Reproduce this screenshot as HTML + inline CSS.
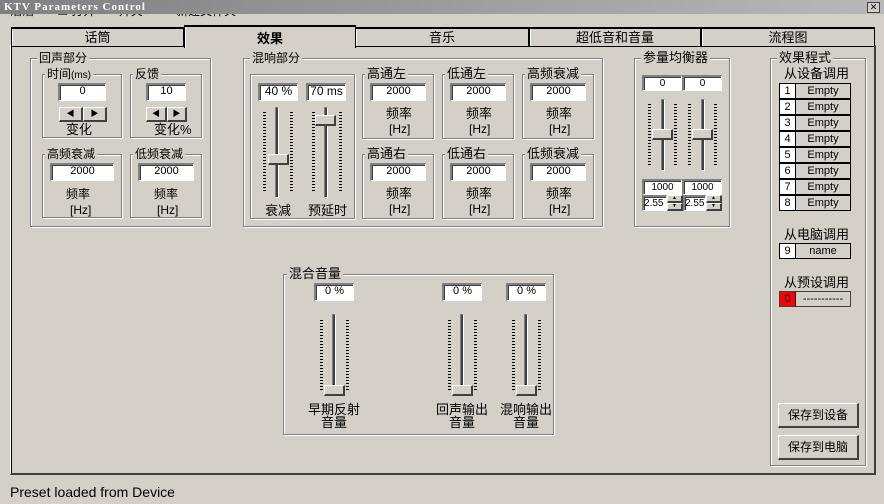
<!DOCTYPE html>
<html><head><meta charset="utf-8"><style>
*{box-sizing:border-box}
body{margin:0;width:884px;height:504px;background:#d4d0c8;position:relative;overflow:hidden;font-family:"Liberation Sans","Noto Sans CJK SC","WenQuanYi Zen Hei",sans-serif;font-size:12px;color:#000}
div,span{position:absolute}
.t{white-space:nowrap;line-height:13px}
.g{border:1px solid #808080;box-shadow:1px 1px 0 #fff inset,1px 1px 0 #fff}
.lg{background:#d4d0c8;padding:0 2px;top:-8px;left:6px;font-size:12px;line-height:14px;white-space:nowrap}
.in{background:#fff;border-top:2px solid #808080;border-left:2px solid #808080;border-right:1px solid #fff;border-bottom:1px solid #fff;text-align:center;font-size:11px;line-height:13px;box-shadow:1px 1px 0 #404040 inset}
.btn{background:#d4d0c8;border-top:1px solid #fff;border-left:1px solid #fff;border-right:2px solid #404040;border-bottom:2px solid #404040;text-align:center}
.tr{width:4px;border-left:1px solid #808080;border-top:1px solid #808080;border-right:1px solid #fff;border-bottom:1px solid #fff;background:#404040;box-shadow:0 0 0 0}
.tk{width:3px;background:repeating-linear-gradient(#000 0 1px,transparent 1px 3px)}
.th{width:21px;height:11px;background:#d4d0c8;border-top:1px solid #fff;border-left:1px solid #fff;border-right:2px solid #404040;border-bottom:2px solid #404040}
.c{text-align:center}
.tab{top:27px;height:19px;border:1px solid #000;border-bottom:none;border-top:2px solid #000;background:#d4d0c8;text-align:center;font-size:13px;line-height:17px;box-shadow:1px 0 0 #fff inset}
.row{left:779px;width:72px;height:16px;border:1px solid #000;background:#d4d0c8}
.row span{top:0;line-height:14px;font-size:11px}
</style></head><body>
<div style="left:0;top:0;width:884px;height:14px;background:linear-gradient(90deg,#808080,#b8b8b8)"></div>
<div class="t" style="left:4px;top:1px;color:#fff;font-family:'Liberation Serif',serif;font-weight:bold;font-size:11px;letter-spacing:1px">KTV Parameters Control</div>
<div style="left:867px;top:2px;width:13px;height:11px;border:1px solid #404040;background:#d4d0c8;font-size:9px;line-height:9px;text-align:center">✕</div>
<div style="left:10px;top:14px;width:260px;height:4px;overflow:hidden"><div class="t" style="top:-9px;left:0">沼沼 &nbsp;&nbsp;&nbsp;&nbsp;&nbsp;&nbsp;☐ 打开 &nbsp;&nbsp;&nbsp;&nbsp;&nbsp; 开关 &nbsp;&nbsp;&nbsp;&nbsp;&nbsp;&nbsp;&nbsp;&nbsp; 新建文件夹</div></div>

<!-- panel -->
<div style="left:10px;top:45px;width:866px;height:430px;border-left:1px solid #fff;border-top:1px solid #fff;border-right:2px solid #404040;border-bottom:2px solid #404040;box-shadow:1px 1px 0 #000 inset"></div>
<div class="tab" style="left:11px;width:173px;">话筒</div>
<div class="tab" style="left:355px;width:174px;">音乐</div>
<div class="tab" style="left:529px;width:172px;">超低音和音量</div>
<div class="tab" style="left:701px;width:174px;">流程图</div>
<div class="tab" style="left:184px;top:25px;width:172px;height:23px;border-bottom:none;font-weight:bold;line-height:24px">效果</div>

<!-- 回声部分 -->
<div class="g" style="left:30px;top:58px;width:181px;height:169px"><span class="lg">回声部分</span></div>
<div class="g" style="left:42px;top:74px;width:80px;height:64px"><span class="lg" style="left:2px">时间<small style="font-size:10px">(ms)</small></span></div>
<div class="in" style="left:58px;top:83px;width:48px;height:18px">0</div>
<div class="btn" style="left:59px;top:107px;width:24px;height:15px;font-size:8px;line-height:12px">◀</div>
<div class="btn" style="left:83px;top:107px;width:24px;height:15px;font-size:8px;line-height:12px">▶</div>
<div class="t" style="left:66px;top:123px;font-size:13px">变化</div>
<div class="g" style="left:130px;top:74px;width:72px;height:64px"><span class="lg" style="left:2px">反馈</span></div>
<div class="in" style="left:146px;top:83px;width:40px;height:18px">10</div>
<div class="btn" style="left:146px;top:107px;width:21px;height:15px;font-size:8px;line-height:12px">◀</div>
<div class="btn" style="left:167px;top:107px;width:20px;height:15px;font-size:8px;line-height:12px">▶</div>
<div class="t" style="left:154px;top:123px;font-size:13px">变化%</div>
<div class="g" style="left:42px;top:154px;width:80px;height:64px"><span class="lg" style="left:2px">高频衰减</span></div>
<div class="in" style="left:50px;top:163px;width:64px;height:18px">2000</div>
<div class="t" style="left:66px;top:188px">频率</div><div class="t" style="left:70px;top:204px">[Hz]</div>
<div class="g" style="left:130px;top:154px;width:72px;height:64px"><span class="lg" style="left:2px">低频衰减</span></div>
<div class="in" style="left:138px;top:163px;width:56px;height:18px">2000</div>
<div class="t" style="left:154px;top:188px">频率</div><div class="t" style="left:157px;top:204px">[Hz]</div>

<!-- 混响部分 -->
<div class="g" style="left:243px;top:58px;width:360px;height:169px"><span class="lg">混响部分</span></div>
<div class="g" style="left:250px;top:74px;width:105px;height:145px"></div>
<div class="in" style="left:258px;top:83px;width:40px;height:18px;font-size:12px">40 %</div>
<div class="in" style="left:306px;top:83px;width:40px;height:18px;font-size:12px">70 ms</div>
<div class="tr" style="left:275px;top:107px;height:91px"></div>
<div class="tk" style="left:263px;top:112px;height:79px"></div><div class="tk" style="left:290px;top:112px;height:79px"></div>
<div class="th" style="left:268px;top:154px"></div>
<div class="tr" style="left:324px;top:107px;height:91px"></div>
<div class="tk" style="left:312px;top:112px;height:79px"></div><div class="tk" style="left:339px;top:112px;height:79px"></div>
<div class="th" style="left:315px;top:115px"></div>
<div class="t" style="left:265px;top:204px;font-size:13px">衰减</div>
<div class="t" style="left:308px;top:204px;font-size:13px">预延时</div>

<div class="g" style="left:362px;top:74px;width:72px;height:65px"><span class="lg" style="left:2px;font-size:13px">高通左</span></div>
<div class="in" style="left:370px;top:83px;width:56px;height:18px">2000</div>
<div class="t" style="left:386px;top:107px;font-size:13px">频率</div><div class="t" style="left:389px;top:123px">[Hz]</div>
<div class="g" style="left:442px;top:74px;width:72px;height:65px"><span class="lg" style="left:2px;font-size:13px">低通左</span></div>
<div class="in" style="left:450px;top:83px;width:56px;height:18px">2000</div>
<div class="t" style="left:466px;top:107px;font-size:13px">频率</div><div class="t" style="left:469px;top:123px">[Hz]</div>
<div class="g" style="left:522px;top:74px;width:72px;height:65px"><span class="lg" style="left:2px;font-size:13px">高频衰减</span></div>
<div class="in" style="left:530px;top:83px;width:56px;height:18px">2000</div>
<div class="t" style="left:546px;top:107px;font-size:13px">频率</div><div class="t" style="left:549px;top:123px">[Hz]</div>
<div class="g" style="left:362px;top:154px;width:72px;height:65px"><span class="lg" style="left:2px;font-size:13px">高通右</span></div>
<div class="in" style="left:370px;top:163px;width:56px;height:18px">2000</div>
<div class="t" style="left:386px;top:187px;font-size:13px">频率</div><div class="t" style="left:389px;top:203px">[Hz]</div>
<div class="g" style="left:442px;top:154px;width:72px;height:65px"><span class="lg" style="left:2px;font-size:13px">低通右</span></div>
<div class="in" style="left:450px;top:163px;width:56px;height:18px">2000</div>
<div class="t" style="left:466px;top:187px;font-size:13px">频率</div><div class="t" style="left:469px;top:203px">[Hz]</div>
<div class="g" style="left:522px;top:154px;width:72px;height:65px"><span class="lg" style="left:2px;font-size:13px">低频衰减</span></div>
<div class="in" style="left:530px;top:163px;width:56px;height:18px">2000</div>
<div class="t" style="left:546px;top:187px;font-size:13px">频率</div><div class="t" style="left:549px;top:203px">[Hz]</div>

<!-- 参量均衡器 -->
<div class="g" style="left:634px;top:58px;width:96px;height:169px"><span class="lg" style="font-size:13px">参量均衡器</span></div>
<div class="in" style="left:642px;top:75px;width:40px;height:16px;font-size:10px">0</div>
<div class="in" style="left:682px;top:75px;width:40px;height:16px;font-size:10px">0</div>
<div class="tr" style="left:661px;top:99px;height:72px"></div>
<div class="tk" style="left:648px;top:104px;height:62px"></div><div class="tk" style="left:674px;top:104px;height:62px"></div>
<div class="th" style="left:652px;top:129px"></div>
<div class="tr" style="left:701px;top:99px;height:72px"></div>
<div class="tk" style="left:688px;top:104px;height:62px"></div><div class="tk" style="left:714px;top:104px;height:62px"></div>
<div class="th" style="left:692px;top:129px"></div>
<div class="in" style="left:642px;top:179px;width:40px;height:16px;font-size:10px">1000</div>
<div class="in" style="left:682px;top:179px;width:40px;height:16px;font-size:10px">1000</div>
<div class="in" style="left:642px;top:195px;width:25px;height:16px;font-size:10px;text-align:left">2.55</div>
<div class="btn" style="left:667px;top:195px;width:16px;height:8px;font-size:5px;line-height:5px">▲</div>
<div class="btn" style="left:667px;top:203px;width:16px;height:8px;font-size:5px;line-height:5px">▼</div>
<div class="in" style="left:683px;top:195px;width:23px;height:16px;font-size:10px;text-align:left">2.55</div>
<div class="btn" style="left:706px;top:195px;width:16px;height:8px;font-size:5px;line-height:5px">▲</div>
<div class="btn" style="left:706px;top:203px;width:16px;height:8px;font-size:5px;line-height:5px">▼</div>

<!-- 效果程式 -->
<div class="g" style="left:770px;top:58px;width:96px;height:408px"><span class="lg" style="font-size:13px">效果程式</span></div>
<div class="t" style="left:784px;top:67px;font-size:13px">从设备调用</div>
<div class="row" style="top:83px"><span style="left:0;width:16px;height:14px;background:#fff;border-right:1px solid #000;text-align:center">1</span><span style="left:16px;width:54px;text-align:center">Empty</span></div>
<div class="row" style="top:99px"><span style="left:0;width:16px;height:14px;background:#fff;border-right:1px solid #000;text-align:center">2</span><span style="left:16px;width:54px;text-align:center">Empty</span></div>
<div class="row" style="top:115px"><span style="left:0;width:16px;height:14px;background:#fff;border-right:1px solid #000;text-align:center">3</span><span style="left:16px;width:54px;text-align:center">Empty</span></div>
<div class="row" style="top:131px"><span style="left:0;width:16px;height:14px;background:#fff;border-right:1px solid #000;text-align:center">4</span><span style="left:16px;width:54px;text-align:center">Empty</span></div>
<div class="row" style="top:147px"><span style="left:0;width:16px;height:14px;background:#fff;border-right:1px solid #000;text-align:center">5</span><span style="left:16px;width:54px;text-align:center">Empty</span></div>
<div class="row" style="top:163px"><span style="left:0;width:16px;height:14px;background:#fff;border-right:1px solid #000;text-align:center">6</span><span style="left:16px;width:54px;text-align:center">Empty</span></div>
<div class="row" style="top:179px"><span style="left:0;width:16px;height:14px;background:#fff;border-right:1px solid #000;text-align:center">7</span><span style="left:16px;width:54px;text-align:center">Empty</span></div>
<div class="row" style="top:195px"><span style="left:0;width:16px;height:14px;background:#fff;border-right:1px solid #000;text-align:center">8</span><span style="left:16px;width:54px;text-align:center">Empty</span></div>
<div class="t" style="left:784px;top:228px;font-size:13px">从电脑调用</div>
<div class="row" style="top:243px"><span style="left:0;width:16px;height:14px;background:#fff;border-right:1px solid #000;text-align:center">9</span><span style="left:16px;width:54px;text-align:center">name</span></div>
<div class="t" style="left:784px;top:276px;font-size:13px">从预设调用</div>
<div class="row" style="top:291px;border-color:#404040"><span style="left:0;width:16px;height:14px;background:#f00;border-right:1px solid #000;text-align:center">0</span><span style="left:16px;width:54px;text-align:center">-----------</span></div>
<div class="btn" style="left:778px;top:403px;width:81px;height:25px;line-height:22px;font-size:12px">保存到设备</div>
<div class="btn" style="left:778px;top:435px;width:81px;height:25px;line-height:22px;font-size:12px">保存到电脑</div>

<!-- 混合音量 -->
<div class="g" style="left:283px;top:274px;width:271px;height:161px"><span class="lg" style="left:3px;font-size:13px">混合音量</span></div>
<div class="in" style="left:314px;top:283px;width:40px;height:18px">0 %</div>
<div class="in" style="left:442px;top:283px;width:40px;height:18px">0 %</div>
<div class="in" style="left:506px;top:283px;width:40px;height:18px">0 %</div>
<div class="tr" style="left:332px;top:314px;height:82px"></div>
<div class="tk" style="left:320px;top:320px;height:72px"></div><div class="tk" style="left:346px;top:320px;height:72px"></div>
<div class="th" style="left:324px;top:385px"></div>
<div class="tr" style="left:460px;top:314px;height:82px"></div>
<div class="tk" style="left:448px;top:320px;height:72px"></div><div class="tk" style="left:474px;top:320px;height:72px"></div>
<div class="th" style="left:452px;top:385px"></div>
<div class="tr" style="left:524px;top:314px;height:82px"></div>
<div class="tk" style="left:512px;top:320px;height:72px"></div><div class="tk" style="left:538px;top:320px;height:72px"></div>
<div class="th" style="left:516px;top:385px"></div>
<div class="t c" style="left:305px;top:403px;width:58px;font-size:13px;line-height:13px">早期反射<br>音量</div>
<div class="t c" style="left:433px;top:403px;width:58px;font-size:13px;line-height:13px">回声输出<br>音量</div>
<div class="t c" style="left:497px;top:403px;width:58px;font-size:13px;line-height:13px">混响输出<br>音量</div>

<div class="t" style="left:10px;top:484px;font-size:14px;line-height:16px">Preset loaded from Device</div>
</body></html>
